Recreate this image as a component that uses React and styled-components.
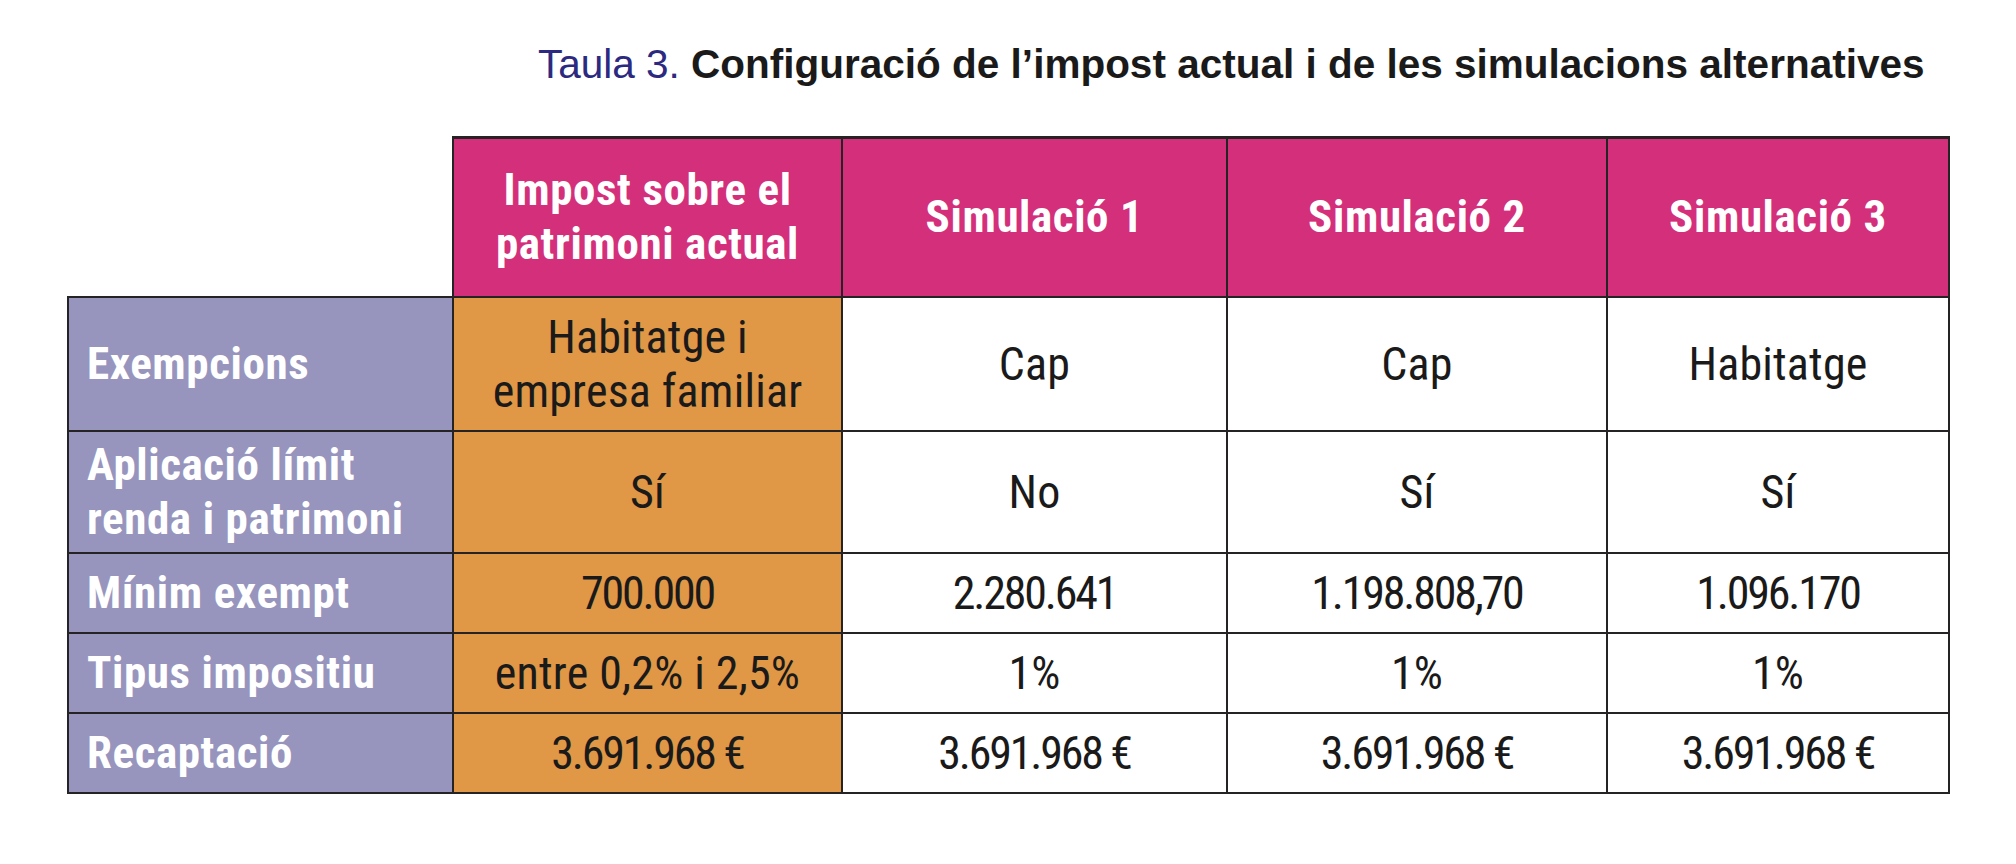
import React from "react";
import styled, { createGlobalStyle } from "styled-components";

const GlobalStyle = createGlobalStyle`
  html, body {
    margin: 0;
    padding: 0;
    background: #ffffff;
  }
  body {
    font-family: "Liberation Sans", Arial, sans-serif;
  }
`;

const condensed = `Roboto, "Open Sans", "Liberation Sans", sans-serif`;

const columns = [385, 389, 385, 380, 342];

const headers = [
  ["Impost sobre el", "patrimoni actual"],
  ["Simulació 1"],
  ["Simulació 2"],
  ["Simulació 3"],
];

const rows = [
  {
    label: ["Exempcions"],
    height: 134,
    values: [["Habitatge i", "empresa familiar"], ["Cap"], ["Cap"], ["Habitatge"]],
  },
  {
    label: ["Aplicació límit", "renda i patrimoni"],
    height: 122,
    values: [["Sí"], ["No"], ["Sí"], ["Sí"]],
  },
  {
    label: ["Mínim exempt"],
    height: 80,
    numeric: true,
    values: [["700.000"], ["2.280.641"], ["1.198.808,70"], ["1.096.170"]],
  },
  {
    label: ["Tipus impositiu"],
    height: 80,
    values: [["entre 0,2% i 2,5%"], ["1%"], ["1%"], ["1%"]],
  },
  {
    label: ["Recaptació"],
    height: 80,
    numeric: true,
    values: [["3.691.968 €"], ["3.691.968 €"], ["3.691.968 €"], ["3.691.968 €"]],
  },
];

const Page = styled.main`
  width: 1881px;
  padding: 38px 0 0 67px;
`;

const Title = styled.h1`
  margin: 0 0 46px;
  padding-left: 471px;
  font-family: "Liberation Sans", Arial, sans-serif;
  font-size: 40.5px;
  line-height: 52px;
  font-weight: 700;
  color: #1b1a1a;
  white-space: nowrap;
`;

const TitleNumber = styled.span`
  font-weight: 400;
  color: #2c2a80;
`;

const Table = styled.table`
  width: 1881px;
  table-layout: fixed;
  border-collapse: collapse;
  font-family: ${condensed};
  font-stretch: 75%;
  font-size: 45px;
  line-height: 54px;
`;

const Row = styled.tr`
  height: ${(p) => p.$height}px;
`;

const Corner = styled.td`
  border: none;
  background: #ffffff;
`;

const HeadCell = styled.th`
  border: 2px solid #262324;
  border-top-width: 3px;
  background: #d42f7a;
  color: #ffffff;
  font-weight: 700;
  letter-spacing: 0.6px;
  text-align: center;
  vertical-align: middle;
  padding: 0 10px;
`;

const LabelCell = styled.th`
  border: 2px solid #262324;
  background: #9795bd;
  color: #ffffff;
  font-weight: 700;
  letter-spacing: 0.6px;
  text-align: left;
  vertical-align: middle;
  padding: 0 0 0 18px;
`;

const ValueCell = styled.td`
  border: 2px solid #262324;
  background: ${(p) => (p.$current ? "#e09746" : "#ffffff")};
  color: #1b1a1a;
  font-size: 46px;
  font-weight: 400;
  letter-spacing: ${(p) => (p.$numeric ? "-2.2px" : "0.2px")};
  text-align: center;
  vertical-align: middle;
  padding: 0 8px;
`;

const Line = styled.span`
  display: block;
  white-space: nowrap;
`;

const Lines = ({ items }) =>
  items.map((text) => <Line key={text}>{text}</Line>);

export default function App() {
  return (
    <>
      <GlobalStyle />
      <Page>
        <Title>
          <TitleNumber>Taula 3.</TitleNumber> Configuració de l’impost actual i
          de les simulacions alternatives
        </Title>
        <Table>
          <colgroup>
            {columns.map((w, i) => (
              <col key={i} style={{ width: w }} />
            ))}
          </colgroup>
          <thead>
            <Row $height={159}>
              <Corner />
              {headers.map((h) => (
                <HeadCell key={h[0]}>
                  <Lines items={h} />
                </HeadCell>
              ))}
            </Row>
          </thead>
          <tbody>
            {rows.map((r) => (
              <Row key={r.label[0]} $height={r.height}>
                <LabelCell scope="row">
                  <Lines items={r.label} />
                </LabelCell>
                {r.values.map((v, i) => (
                  <ValueCell key={i} $current={i === 0} $numeric={r.numeric}>
                    <Lines items={v} />
                  </ValueCell>
                ))}
              </Row>
            ))}
          </tbody>
        </Table>
      </Page>
    </>
  );
}
